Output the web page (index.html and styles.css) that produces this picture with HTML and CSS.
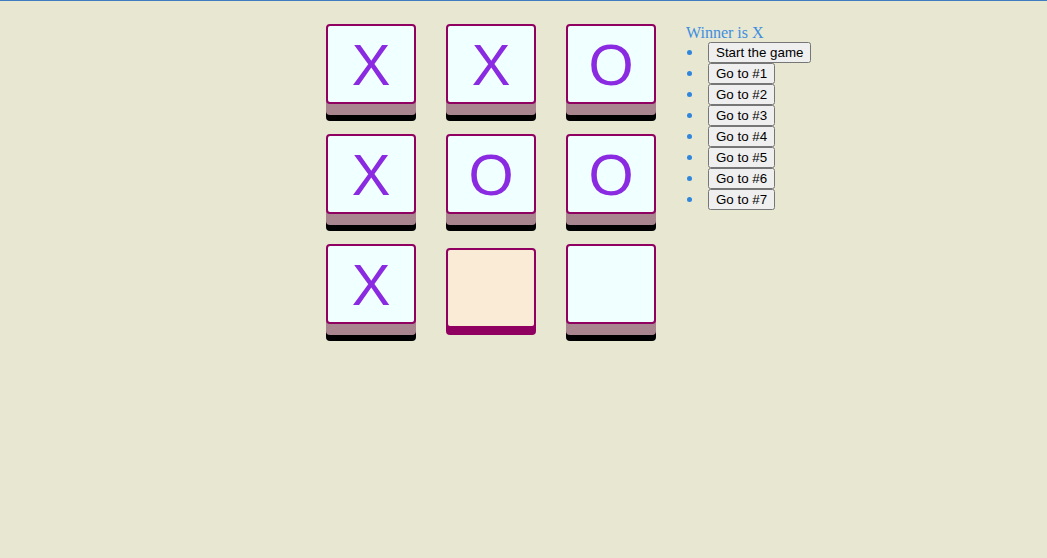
FILE: index.html
```html
<!DOCTYPE html>
<html>
<head>
<meta charset="utf-8">
<link rel="stylesheet" href="styles.css">
</head>
<body>
<div class="game">
  <div class="board">
    <div class="square">X</div>
    <div class="square">X</div>
    <div class="square">O</div>
    <div class="square">X</div>
    <div class="square">O</div>
    <div class="square">O</div>
    <div class="square">X</div>
    <div class="square pressed"></div>
    <div class="square"></div>
  </div>
  <div class="info">
    <div class="status">Winner is X</div>
    <ul class="moves">
      <li><button class="move">Start the game</button></li>
      <li><button class="move">Go to #1</button></li>
      <li><button class="move">Go to #2</button></li>
      <li><button class="move">Go to #3</button></li>
      <li><button class="move">Go to #4</button></li>
      <li><button class="move">Go to #5</button></li>
      <li><button class="move">Go to #6</button></li>
      <li><button class="move">Go to #7</button></li>
    </ul>
  </div>
</div>
</body>
</html>
```
FILE: styles.css
```css
html, body {
  margin: 0;
  padding: 0;
}
body {
  background: #e8e7d1;
  border-top: 1px solid #3f7cbf;
  min-height: 557px;
}
.game {
  display: flex;
  align-items: flex-start;
  gap: 30px;
  padding: 23px 0 0 326px;
}
.board {
  display: grid;
  grid-template-columns: repeat(3, 90px);
  grid-auto-rows: 80px;
  column-gap: 30px;
  row-gap: 30px;
}
.square {
  box-sizing: border-box;
  width: 90px;
  height: 80px;
  border: 2px solid #900060;
  border-radius: 4px;
  background: #f0ffff;
  box-shadow: 0 11px 0 #a9858f, 0 17px 0 #000;
  display: flex;
  align-items: center;
  justify-content: center;
  font-family: "Liberation Sans", Arial, sans-serif;
  font-size: 58px;
  color: #8a2be2;
}
.square.pressed {
  background: #faebd7;
  transform: translateY(4px);
  box-shadow: 0 7px 0 #900060;
}
.info {
  font-family: "Liberation Serif", "Times New Roman", serif;
  font-size: 16px;
  color: #3d8ee0;
}
.status {
  line-height: 18px;
}
.moves {
  margin: 0;
  padding: 0;
  list-style: none;
}
.moves li {
  display: flex;
  align-items: center;
  gap: 16px;
  height: 21px;
}
.moves li::before {
  content: "";
  width: 5px;
  height: 5px;
  margin-left: 1px;
  border-radius: 50%;
  background: #2f86dc;
}
.move {
  font-family: "Liberation Sans", Arial, sans-serif;
  font-size: 13.333px;
  color: #000;
}
```
